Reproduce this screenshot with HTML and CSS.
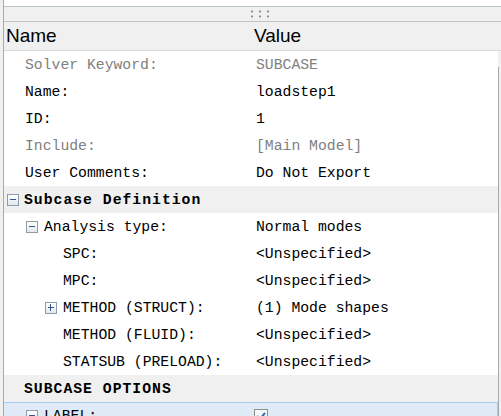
FILE: index.html
```html
<!DOCTYPE html>
<html lang="en">
<head>
  <meta charset="UTF-8">
  <meta name="viewport" content="width=device-width, initial-scale=1.0">
  <title>Entity Editor</title>
  <link rel="stylesheet" href="styles.css">
</head>
<body>
  <div class="panel">
    <div class="grip"><span class="dots"></span></div>
    <div class="head">
      <div class="h-name">Name</div>
      <div class="h-value">Value</div>
    </div>
    <div class="body">
      <div class="rows">
        <div class="row"><div class="name l1 dim">Solver Keyword:</div><div class="value dim">SUBCASE</div></div>
        <div class="row"><div class="name l1">Name:</div><div class="value">loadstep1</div></div>
        <div class="row"><div class="name l1">ID:</div><div class="value">1</div></div>
        <div class="row"><div class="name l1 dim">Include:</div><div class="value dim">[Main Model]</div></div>
        <div class="row"><div class="name l1">User Comments:</div><div class="value">Do Not Export</div></div>

        <div class="row group"><div class="name l0"><span class="tog"></span><b>Subcase Definition</b></div><div class="value"></div></div>
        <div class="row"><div class="name l1t"><span class="tog"></span>Analysis type:</div><div class="value">Normal modes</div></div>
        <div class="row"><div class="name l2">SPC:</div><div class="value">&lt;Unspecified&gt;</div></div>
        <div class="row"><div class="name l2">MPC:</div><div class="value">&lt;Unspecified&gt;</div></div>
        <div class="row"><div class="name l2t"><span class="tog plus"></span>METHOD (STRUCT):</div><div class="value">(1) Mode shapes</div></div>
        <div class="row"><div class="name l2">METHOD (FLUID):</div><div class="value">&lt;Unspecified&gt;</div></div>
        <div class="row"><div class="name l2">STATSUB (PRELOAD):</div><div class="value">&lt;Unspecified&gt;</div></div>

        <div class="row group"><div class="name l0x"><b>SUBCASE OPTIONS</b></div><div class="value"></div></div>
        <div class="row picked"><div class="name l1t"><span class="tog"></span>LABEL:</div>
          <div class="value">
            <svg class="check" width="14" height="14" viewBox="0 0 14 14">
              <rect x="0.5" y="0.5" width="13" height="13" fill="#f4f7fa" stroke="#8f8f8f"/>
              <path d="M3 7l3 3 5-6" fill="none" stroke="#2c6fb4" stroke-width="2"/>
            </svg>
          </div>
        </div>
      </div>
      <div class="vscroll"><div class="track"></div></div>
    </div>
  </div>
</body>
</html>
```

FILE: styles.css
```css
* { box-sizing: border-box; margin: 0; padding: 0; }
body {
  background: #f0f0f0;
  padding-left: 3px;
  height: 416px;
  overflow: hidden;
}
.panel {
  background: #fff;
  border-left: 1px solid #a3a9ae;
  height: 416px;
  padding-top: 6px;
  overflow: hidden;
}

/* splitter grip on top */
.grip {
  height: 16px;
  background: #f0f0f0;
  border-top: 1px solid #b9c4cb;
  border-bottom: 1px solid #b9c4cb;
  display: flex;
  padding-top: 2px;
  padding-left: 244px;
}
.dots {
  width: 24px;
  height: 10px;
  background-image: radial-gradient(circle, #8c8c8c 1px, transparent 1.2px);
  background-size: 8px 5px;
}

.head {
  display: grid;
  grid-template-columns: 250px 1fr;
  height: 29px;
  background: #f0f0f0;
  border-bottom: 1px solid #d3dbe0;
  font-family: "Liberation Sans", Arial, sans-serif;
  font-size: 19px;
  color: #000;
  align-items: center;
}
.h-name { padding-left: 2px; }

.body { display: flex; }
.rows { flex: 1; }
.vscroll {
  width: 3px;
  background: #f0f0f0;
  padding-top: 16px;
}
.track {
  height: 400px;
  border-left: 1px solid #a8a8a8;
}

.row {
  display: grid;
  grid-template-columns: 252px 1fr;
  height: 27px;
  align-items: center;
  font-family: "Liberation Mono", "Courier New", monospace;
  font-size: 14.75px;
  color: #000;
  white-space: nowrap;
}
.row b { letter-spacing: 1px; }
.group { background: #f0f0f0; }
.picked {
  background: #deebf7;
  border-top: 1px solid #a6cdf0;
  border-right: 1px solid #a6cdf0;
}
.dim { color: #808080; }

.name { display: flex; align-items: center; }
.l0 { padding-left: 3px; gap: 5px; }
.l0x { padding-left: 20px; }
.l1 { padding-left: 21px; }
.l1t { padding-left: 22px; gap: 6px; }
.l2 { padding-left: 59px; }
.l2t { padding-left: 41px; gap: 6px; }

/* tree expander box */
.tog {
  width: 12px;
  height: 12px;
  border: 1px solid #8e9dab;
  background: linear-gradient(#ffffff, #e2e7ec);
  position: relative;
  flex: none;
}
.tog::before {
  content: "";
  position: absolute;
  left: 2px;
  right: 2px;
  top: 4px;
  height: 1px;
  background: #34568c;
}
.tog.plus::after {
  content: "";
  position: absolute;
  top: 1px;
  bottom: 2px;
  left: 4px;
  width: 1px;
  background: #34568c;
}

.check { display: block; margin-left: -2px; }
```
